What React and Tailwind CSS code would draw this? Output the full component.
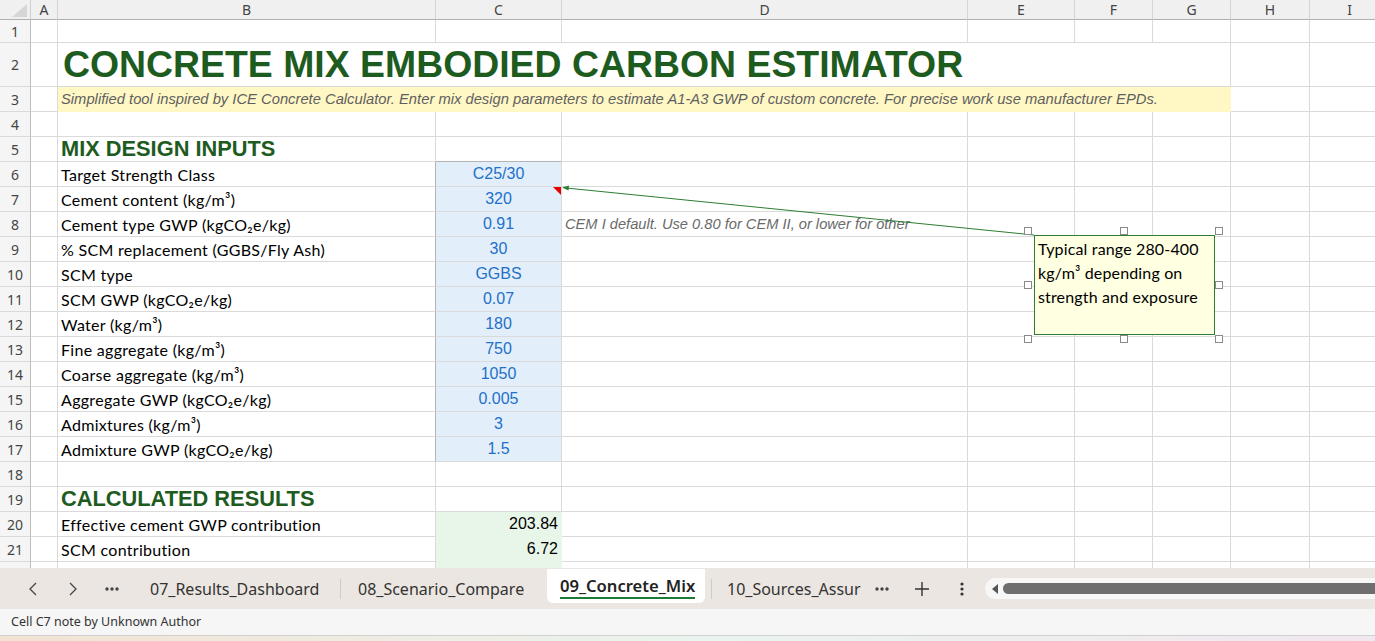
import React from "react";

const COLS = [
  "w-[31px]",
  "w-[27px]",
  "w-[378px]",
  "w-[126px]",
  "w-[406px]",
  "w-[107px]",
  "w-[78px]",
  "w-[78px]",
  "w-[79px]",
  "w-[80px]",
];
const LETTERS = ["A", "B", "C", "D", "E", "F", "G", "H", "I"];

const arial = { fontFamily: '"Liberation Sans", Arial, sans-serif' };
const calibri = { fontFamily: 'Lato, "Open Sans", sans-serif' };
const ui = { fontFamily: '"Noto Sans", "Open Sans", sans-serif' };

function RowNum({ n, h }) {
  return (
    <div
      className={`${COLS[0]} ${h} shrink-0 flex items-center justify-center bg-[#f5f5f5] border-r border-b border-r-[#bdbdbd] border-b-[#dadada] text-[14px] text-[#444]`}
      style={ui}
    >
      {n}
    </div>
  );
}

function Cell({ i, h, className = "", children }) {
  return (
    <div
      className={`${COLS[i]} ${h} shrink-0 border-r border-b border-[#dadada] flex overflow-visible whitespace-nowrap ${className}`}
    >
      {children}
    </div>
  );
}

function EmptyCells({ from, h }) {
  const out = [];
  for (let i = from; i < COLS.length; i++) out.push(<Cell key={i} i={i} h={h} />);
  return out;
}

const inputs = [
  ["Target Strength Class", "C25/30"],
  ["Cement content (kg/m³)", "320"],
  ["Cement type GWP (kgCO₂e/kg)", "0.91"],
  ["% SCM replacement (GGBS/Fly Ash)", "30"],
  ["SCM type", "GGBS"],
  ["SCM GWP (kgCO₂e/kg)", "0.07"],
  ["Water (kg/m³)", "180"],
  ["Fine aggregate (kg/m³)", "750"],
  ["Coarse aggregate (kg/m³)", "1050"],
  ["Aggregate GWP (kgCO₂e/kg)", "0.005"],
  ["Admixtures (kg/m³)", "3"],
  ["Admixture GWP (kgCO₂e/kg)", "1.5"],
];

function Handle({ x, y }) {
  return (
    <div
      className="absolute w-[8px] h-[8px] bg-white border border-[#8a8a8a]"
      style={{ left: x - 4, top: y - 4 }}
    />
  );
}

function Dots() {
  return (
    <svg width="16" height="6" viewBox="0 0 16 6">
      <circle cx="3" cy="3" r="1.7" fill="#444" />
      <circle cx="8" cy="3" r="1.7" fill="#444" />
      <circle cx="13" cy="3" r="1.7" fill="#444" />
    </svg>
  );
}

export default function App() {
  const H = "h-[25px]";
  return (
    <div className="w-[1375px] h-[641px] overflow-hidden bg-white flex flex-col">
      {/* Grid */}
      <div className="relative h-[568px] overflow-hidden shrink-0">
        {/* Header row */}
        <div className="flex h-[20px]">
          <div className="w-[31px] h-[20px] shrink-0 bg-[#f0f0f0] border-r border-b border-r-[#d0d0d0] border-b-[#b0b0b0] relative">
            <svg className="absolute left-[12px] top-[4px]" width="15" height="13" viewBox="0 0 15 13">
              <polygon points="15,0 15,13 0,13" fill="#d6d6d6" />
            </svg>
          </div>
          {LETTERS.map((l, k) => (
            <div
              key={l}
              className={`${COLS[k + 1]} h-[20px] shrink-0 bg-[#f0f0f0] border-r border-b border-r-[#d4d4d4] border-b-[#b0b0b0] flex items-center justify-center text-[14px] text-[#444]`}
              style={ui}
            >
              {l}
            </div>
          ))}
        </div>

        {/* Row 1 */}
        <div className="flex">
          <RowNum n={1} h="h-[23px]" />
          <EmptyCells from={1} h="h-[23px]" />
        </div>

        {/* Row 2 title */}
        <div className="flex">
          <RowNum n={2} h="h-[44px]" />
          <Cell i={1} h="h-[44px]" />
          <div className="w-[1173px] h-[44px] shrink-0 border-r border-b border-[#dadada] flex items-end pl-[5px] pb-[1px] whitespace-nowrap">
            <span className="text-[37.4px] font-bold text-[#1e5b1e] leading-none pb-[2px]" style={arial}>
              CONCRETE MIX EMBODIED CARBON ESTIMATOR
            </span>
          </div>
          <Cell i={8} h="h-[44px]" />
          <Cell i={9} h="h-[44px]" />
        </div>

        {/* Row 3 subtitle */}
        <div className="flex">
          <RowNum n={3} h={H} />
          <Cell i={1} h={H} />
          <div className="w-[1173px] h-[25px] shrink-0 bg-[#fff8c5] border-r border-b border-[#fff8c5] flex items-center pl-[3px] whitespace-nowrap">
            <span className="text-[14.75px] italic text-[#5f5f5f]" style={arial}>
              Simplified tool inspired by ICE Concrete Calculator. Enter mix design parameters to estimate A1-A3 GWP of custom concrete. For precise work use manufacturer EPDs.
            </span>
          </div>
          <Cell i={8} h={H} />
          <Cell i={9} h={H} />
        </div>

        {/* Row 4 */}
        <div className="flex">
          <RowNum n={4} h={H} />
          <EmptyCells from={1} h={H} />
        </div>

        {/* Row 5 */}
        <div className="flex">
          <RowNum n={5} h={H} />
          <Cell i={1} h={H} />
          <Cell i={2} h={H} className="items-end pl-[3px] pb-[1px]">
            <span className="text-[21.8px] font-bold text-[#1e5b1e] leading-none" style={arial}>
              MIX DESIGN INPUTS
            </span>
          </Cell>
          <Cell i={3} h={H} className="border-b-[#b4b4b4]" />
          <EmptyCells from={4} h={H} />
        </div>

        {/* Rows 6-17 inputs */}
        {inputs.map(([label, value], k) => (
          <div className="flex" key={label}>
            <RowNum n={6 + k} h={H} />
            <Cell i={1} h={H} />
            <Cell i={2} h={H} className="items-center pl-[3px] pt-[2px] border-r-[#b4b4b4]">
              <span className="text-[16px] tracking-[0.3px] text-black" style={calibri}>
                {label}
              </span>
            </Cell>
            <Cell i={3} h={H} className="items-center justify-center bg-[#e2effb] border-[#b4b4b4]">
              <span className="text-[16px] text-[#2470c8]" style={arial}>
                {value}
              </span>
            </Cell>
            <Cell i={4} h={H} className="items-center pl-[3px]">
              {k === 2 && (
                <span className="text-[14.67px] italic text-[#6a6a6a]" style={arial}>
                  CEM I default. Use 0.80 for CEM II, or lower for other
                </span>
              )}
            </Cell>
            <EmptyCells from={5} h={H} />
          </div>
        ))}

        {/* Row 18 */}
        <div className="flex">
          <RowNum n={18} h={H} />
          <EmptyCells from={1} h={H} />
        </div>

        {/* Row 19 */}
        <div className="flex">
          <RowNum n={19} h={H} />
          <Cell i={1} h={H} />
          <Cell i={2} h={H} className="items-end pl-[3px] pb-[1px]">
            <span className="text-[21.8px] font-bold text-[#1e5b1e] leading-none" style={arial}>
              CALCULATED RESULTS
            </span>
          </Cell>
          <EmptyCells from={3} h={H} />
        </div>

        {/* Rows 20-22 */}
        {[
          [20, "Effective cement GWP contribution", "203.84"],
          [21, "SCM contribution", "6.72"],
          ["", "", ""],
        ].map(([n, label, val], idx) => (
          <div className="flex" key={idx}>
            <RowNum n={n} h={H} />
            <Cell i={1} h={H} />
            <Cell i={2} h={H} className="items-center pl-[3px] pt-[2px]">
              <span className="text-[16px] tracking-[0.3px] text-black" style={calibri}>
                {label}
              </span>
            </Cell>
            <Cell i={3} h={H} className="items-center justify-end pr-[3px] bg-[#e8f5e9] border-[#e8f5e9]">
              <span className="text-[16px] text-black" style={arial}>
                {val}
              </span>
            </Cell>
            <EmptyCells from={4} h={H} />
          </div>
        ))}

        {/* Comment indicator */}
        <svg className="absolute left-[553px] top-[187px]" width="8" height="8" viewBox="0 0 8 8">
          <polygon points="0,0 8,0 8,8" fill="#e60000" />
        </svg>

        {/* Arrow line */}
        <svg className="absolute left-0 top-0" width="1375" height="568" viewBox="0 0 1375 568">
          <line x1="1034" y1="235" x2="566" y2="188" stroke="#2e7d32" strokeWidth="1" />
          <polygon points="562,187.6 569,185.5 568.5,190.5" fill="#2e7d32" />
        </svg>

        {/* Comment box */}
        <div
          className="absolute left-[1034px] top-[235px] w-[181px] h-[100px] bg-[#ffffe1] border border-[#2e7d32] pl-[3px] pt-[1px] text-[16px] tracking-[0.15px] leading-[24px] text-black whitespace-nowrap"
          style={calibri}
        >
          <div>Typical range 280-400</div>
          <div>kg/m³ depending on</div>
          <div>strength and exposure</div>
        </div>
        <Handle x={1028} y={231} />
        <Handle x={1124} y={231} />
        <Handle x={1219} y={231} />
        <Handle x={1028} y={285} />
        <Handle x={1219} y={285} />
        <Handle x={1028} y={339} />
        <Handle x={1124} y={339} />
        <Handle x={1219} y={339} />
      </div>

      {/* Tab bar */}
      <div className="h-[41px] shrink-0 bg-[#ebe6e1] flex items-center text-[#333]" style={ui}>
        <div className="w-[18px] shrink-0" />
        <div className="w-[30px] shrink-0 flex justify-center">
          <svg width="10" height="16" viewBox="0 0 10 16">
            <path d="M8 2 L2 8 L8 14" fill="none" stroke="#444" strokeWidth="1.3" />
          </svg>
        </div>
        <div className="w-[10px] shrink-0" />
        <div className="w-[30px] shrink-0 flex justify-center">
          <svg width="10" height="16" viewBox="0 0 10 16">
            <path d="M2 2 L8 8 L2 14" fill="none" stroke="#444" strokeWidth="1.3" />
          </svg>
        </div>
        <div className="w-[9px] shrink-0" />
        <div className="w-[30px] shrink-0 flex justify-center">
          <Dots />
        </div>
        <div className="w-[213px] shrink-0 pl-[23px] text-[16px] whitespace-nowrap">07_Results_Dashboard</div>
        <div className="w-px h-[20px] bg-[#cfcac5] shrink-0" />
        <div className="w-[206px] shrink-0 pl-[17px] text-[16px] whitespace-nowrap">08_Scenario_Compare</div>
        <div className="w-[158px] h-[34px] shrink-0 self-start mt-[1px] bg-white rounded-b-[6px] pl-[13px] flex flex-col justify-center">
          <div className="text-[16.6px] font-semibold text-[#222] whitespace-nowrap leading-[20px] inline-block w-fit border-b-[2.5px] border-[#1e7b34] pb-[1px] mt-[2px]">
            09_Concrete_Mix
          </div>
        </div>
        <div className="w-[6px] shrink-0" />
        <div className="w-px h-[20px] bg-[#cfcac5] shrink-0" />
        <div className="w-[157px] shrink-0 pl-[15px] text-[16px] whitespace-nowrap overflow-hidden">10_Sources_Assur</div>
        <div className="w-[26px] shrink-0 flex justify-center">
          <Dots />
        </div>
        <div className="w-[14px] shrink-0" />
        <div className="w-[26px] shrink-0 flex justify-center">
          <svg width="16" height="16" viewBox="0 0 16 16">
            <path d="M8 1 V15 M1 8 H15" stroke="#333" strokeWidth="1.4" />
          </svg>
        </div>
        <div className="w-[14px] shrink-0" />
        <div className="w-[26px] shrink-0 flex justify-center">
          <svg width="4" height="16" viewBox="0 0 4 16">
            <circle cx="2" cy="3" r="1.6" fill="#333" />
            <circle cx="2" cy="8" r="1.6" fill="#333" />
            <circle cx="2" cy="13" r="1.6" fill="#333" />
          </svg>
        </div>
        <div className="w-[10px] shrink-0" />
        <div className="flex-1 h-[21px] bg-[#f7f7f7] rounded-l-full flex items-center pl-[6px] -mr-[20px]">
          <svg width="8" height="10" viewBox="0 0 8 10" className="shrink-0">
            <polygon points="7,0 7,10 1,5" fill="#555" />
          </svg>
          <div className="ml-[4px] flex-1 h-[11px] rounded-full bg-[#6e6e6e]" />
        </div>
      </div>

      {/* Status bar */}
      <div className="h-[27px] shrink-0 bg-[#f6f6f6] border-b border-[#cfcfcf] flex items-center pl-[11px]" style={ui}>
        <span className="text-[12.5px] text-[#333]">Cell C7 note by Unknown Author</span>
      </div>
      <div className="flex-1 bg-gradient-to-r from-[#f3e3d3] via-[#eaf4ee] to-[#f1e7ef]" />
    </div>
  );
}
